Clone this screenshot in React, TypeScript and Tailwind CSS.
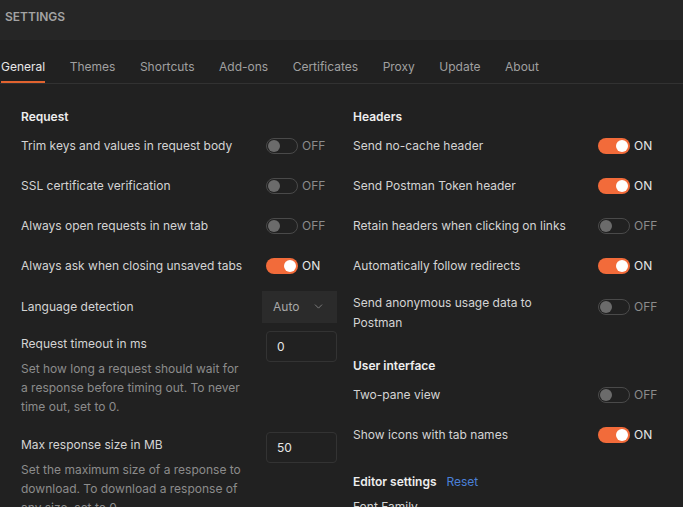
import { ChevronDown } from "lucide-react";

const TABS = ["General", "Themes", "Shortcuts", "Add-ons", "Certificates", "Proxy", "Update", "About"];

function Toggle({ on }: { on: boolean }) {
  return (
    <div className="flex items-center gap-1 w-[71px]">
      {on ? (
        <div className="w-8 h-4 rounded-full bg-[#f26b3a] flex items-center justify-end px-[2px]">
          <div className="w-3 h-3 rounded-full bg-white" />
        </div>
      ) : (
        <div className="w-8 h-4 rounded-full border border-[#4a4a4a] flex items-center px-[1px]">
          <div className="w-3 h-3 rounded-full bg-[#6b6b6b]" />
        </div>
      )}
      <span className={on ? "text-[12px] text-[#e6e6e6]" : "text-[12px] text-[#8c8c8c]"}>{on ? "ON" : "OFF"}</span>
    </div>
  );
}

function Row({ label, on }: { label: string; on: boolean }) {
  return (
    <div className="h-10 flex items-center justify-between">
      <span className="text-[#d4d4d4]">{label}</span>
      <Toggle on={on} />
    </div>
  );
}

function Title({ children }: { children: React.ReactNode }) {
  return <div className="h-[18px] leading-[18px] font-semibold text-[#eeeeee]">{children}</div>;
}

function NumberField({ title, value, desc }: { title: string; value: string; desc: string }) {
  return (
    <div className="flex items-start justify-between">
      <div className="pt-[3px]">
        <div className="leading-5 text-[#d4d4d4]">{title}</div>
        <p className="mt-[5px] w-[224px] leading-[19px] text-[#8c8c8c]">{desc}</p>
      </div>
      <div className="w-[71px] h-[31px] rounded border border-[#333333] flex items-center px-[10px] text-[#e6e6e6]">{value}</div>
    </div>
  );
}

export default function App() {
  return (
    <div className="w-[683px] h-[507px] overflow-hidden bg-[#212121] text-[12px] font-['Inter','Noto_Sans',sans-serif]">
      <div className="h-10 bg-[#262626] px-[5px] pt-[8px]">
        <span className="text-[12px] leading-4 font-semibold text-[#a3a3a3]">SETTINGS</span>
      </div>

      <div className="h-11 flex items-stretch gap-[24.5px] pl-[1px] border-b border-[#323232]">
        {TABS.map((t, i) => (
          <div key={t} className={i === 0 ? "flex items-center border-b-2 border-[#e2632f] text-[#e8e8e8] pt-[12px]" : "flex items-center text-[#a0a0a0] pt-[10px]"}>
            {t}
          </div>
        ))}
      </div>

      <div className="grid grid-cols-[316px_316px] gap-x-4 pl-[21px] pt-6">
        <div>
          <Title>Request</Title>
          <Row label="Trim keys and values in request body" on={false} />
          <Row label="SSL certificate verification" on={false} />
          <Row label="Always open requests in new tab" on={false} />
          <Row label="Always ask when closing unsaved tabs" on={true} />
          <div className="h-10 flex items-center justify-between pt-[1px]">
            <span className="text-[#d4d4d4]">Language detection</span>
            <div className="w-[75px] h-8 bg-[#2b2b2b] flex items-center justify-between pl-[11px] pr-[12px] text-[#a8a8a8]">
              <span>Auto</span>
              <ChevronDown size={13} strokeWidth={1.5} className="text-[#8c8c8c]" />
            </div>
          </div>
          <div className="mt-[5px]">
            <NumberField
              title="Request timeout in ms"
              value="0"
              desc="Set how long a request should wait for a response before timing out. To never time out, set to 0."
            />
          </div>
          <div className="mt-[16px]">
            <NumberField
              title="Max response size in MB"
              value="50"
              desc="Set the maximum size of a response to download. To download a response of any size, set to 0."
            />
          </div>
        </div>

        <div>
          <Title>Headers</Title>
          <Row label="Send no-cache header" on={true} />
          <Row label="Send Postman Token header" on={true} />
          <Row label="Retain headers when clicking on links" on={false} />
          <Row label="Automatically follow redirects" on={true} />
          <div className="flex items-start justify-between pt-[7px]">
            <span className="w-[230px] leading-5 text-[#d4d4d4]">Send anonymous usage data to Postman</span>
            <div className="pt-[5px]">
              <Toggle on={false} />
            </div>
          </div>
          <div className="mt-[24px]">
            <Title>User interface</Title>
          </div>
          <Row label="Two-pane view" on={false} />
          <Row label="Show icons with tab names" on={true} />
          <div className="mt-[18px] flex items-center gap-[10px] h-[18px]">
            <span className="font-semibold text-[#eeeeee]">Editor settings</span>
            <span className="text-[#4a80d8]">Reset</span>
          </div>
          <div className="mt-[6px] text-[#d4d4d4] leading-5">Font Family</div>
        </div>
      </div>
    </div>
  );
}
